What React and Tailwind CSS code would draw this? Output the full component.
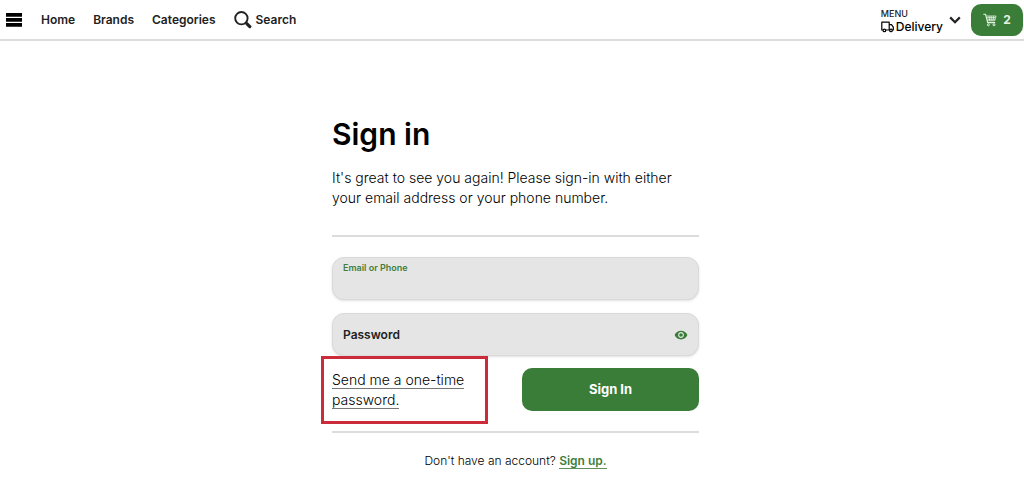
import { MdVisibility } from "react-icons/md";

function MenuIcon() {
  return (
    <svg viewBox="0 0 16 14" className="h-[14px] w-4" fill="currentColor" aria-hidden="true">
      <path d="M0 0h16v3.8H0zM0 5h16v3.8H0zM0 10h16v3.8H0z" />
    </svg>
  );
}

function SearchIcon() {
  return (
    <svg viewBox="0 0 18 18" className="size-[18px]" fill="none" stroke="currentColor" aria-hidden="true">
      <circle cx="7.4" cy="7.2" r="6.2" strokeWidth="1.9" />
      <path d="M11.8 11.6l1.6 1.6" strokeWidth="2" />
      <path d="M13 12.8l2.8 2.8" strokeWidth="3.2" strokeLinecap="round" />
    </svg>
  );
}

function TruckIcon() {
  return (
    <svg viewBox="0 0 13 12" className="h-3 w-[13px]" fill="none" stroke="currentColor" strokeWidth="1.2" strokeLinejoin="round" aria-hidden="true">
      <path d="M2 9H.8V1.2h7.4V9H4.8M8.2 3.6h2.3l1.8 2.6V9h-1M8.2 9h.6" />
      <circle cx="3.4" cy="9.4" r="1.3" />
      <circle cx="10" cy="9.4" r="1.3" />
    </svg>
  );
}

function ChevronIcon() {
  return (
    <svg viewBox="0 0 12 8" className="h-2 w-3" fill="none" stroke="currentColor" strokeWidth="2.2" aria-hidden="true">
      <path d="M1.2 1.4L6 6.2l4.8-4.8" />
    </svg>
  );
}

function CartIcon() {
  return (
    <svg viewBox="0 0 14 14" className="size-[14px]" fill="none" stroke="currentColor" aria-hidden="true">
      <path d="M.3 1.2h2.2l2.2 8.4h7.5" strokeWidth="1.1" />
      <path d="M3 3h10l-1.3 4.8H4.2M3.4 4.6h9M3.9 6.2h8.2M6 3l.6 4.8M8.2 3v4.8M10.6 3L10 7.8" strokeWidth=".8" />
      <circle cx="5.4" cy="11.8" r="1" strokeWidth="1" />
      <circle cx="11" cy="11.8" r="1" strokeWidth="1" />
    </svg>
  );
}

export default function App() {
  return (
    <div className="bg-white font-['Inter',sans-serif] text-[#222]">
      <header className="flex h-[41px] items-center border-b-2 border-[#dcdcdc] pr-px pl-1.5">
        <nav className="flex items-center text-xs font-semibold">
          <button type="button" aria-label="Open menu" className="mr-[19px] text-black">
            <MenuIcon />
          </button>
          <div className="flex items-center gap-[18px]">
            <a href="#home">Home</a>
            <a href="#brands">Brands</a>
            <a href="#categories">Categories</a>
            <a href="#search" className="flex items-center gap-1">
              <SearchIcon />
              Search
            </a>
          </div>
        </nav>
        <button type="button" className="mr-2.5 ml-auto flex items-center gap-1.5 text-left">
          <span className="flex flex-col pt-0.5">
            <span className="text-[9px] leading-3 font-medium">MENU</span>
            <span className="flex items-center gap-[2px] text-xs leading-[14px] font-medium text-black">
              <TruckIcon />
              Delivery
            </span>
          </span>
          <ChevronIcon />
        </button>
        <button type="button" aria-label="Cart, 2 items" className="flex h-8 w-[52px] items-center justify-center gap-1.5 rounded-[10px] bg-[#3a7d38] text-xs font-bold text-[#e4f2e2]">
          <CartIcon />
          2
        </button>
      </header>

      <main className="pt-[73px] pl-[7px]">
        <form className="mx-auto max-w-[367px]" onSubmit={(e) => e.preventDefault()}>
          <h1 className="text-[30px] leading-10 font-semibold text-black">Sign in</h1>
          <p className="mt-[14px] pr-5 text-sm leading-5 font-light text-black">
            It's great to see you again! Please sign-in with either your email address or your phone number.
          </p>
          <hr className="mt-[27px] border-t-2 border-[#dcdcdc]" />

          <div className="mt-5 h-[43px] rounded-xl border border-[#dadada] bg-[#e5e5e5] px-2.5 pt-1 shadow-sm">
            <label htmlFor="account" className="block text-[9px] leading-3 font-semibold text-[#3f7f3c]">Email or Phone</label>
            <input id="account" type="text" className="block h-5 w-full bg-transparent text-xs outline-none" />
          </div>

          <div className="mt-[13px] flex h-[43px] items-center rounded-xl border border-[#dadada] bg-[#e5e5e5] px-2.5 shadow-sm">
            <label htmlFor="password" className="text-xs font-semibold">Password</label>
            <input id="password" type="password" className="h-5 min-w-0 flex-1 bg-transparent px-2 text-xs outline-none" />
            <button type="button" aria-label="Show password" className="text-[#3a7d38]">
              <MdVisibility className="size-[14px]" />
            </button>
          </div>

          <div className="-ml-[11px] flex items-start justify-between">
            <div className="h-[68px] w-[167px] border-3 border-[#cc2c3a] px-2 pt-[11px] text-sm leading-5 text-black">
              <a href="#one-time-password" className="border-b border-[#777] font-light">
                Send me a one-time password.
              </a>
            </div>
            <button type="submit" className="mt-3 h-[43px] w-[177px] rounded-[10px] bg-[#3a7d38] text-[13px] font-bold text-white">
              Sign In
            </button>
          </div>

          <hr className="mt-[7px] border-t-2 border-[#dcdcdc]" />
          <p className="mt-5 text-center text-xs leading-4 font-light text-black">
            Don't have an account?{" "}
            <a href="#sign-up" className="border-b border-[#5f8f5c] font-semibold text-[#3f7f3c]">Sign up.</a>
          </p>
        </form>
      </main>
    </div>
  );
}
